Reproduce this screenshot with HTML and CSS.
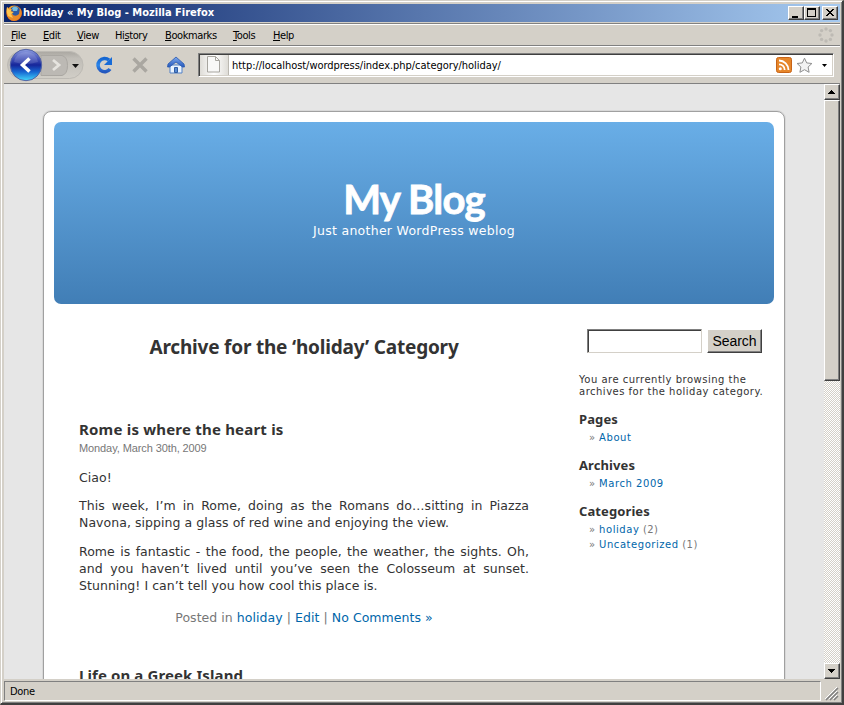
FILE: index.html
```html
<!DOCTYPE html>
<html lang="en">
<head>
<meta charset="utf-8">
<title>holiday « My Blog</title>
<link rel="stylesheet" href="styles.css">
</head>
<body>
<div class="window">
  <div class="titlebar">
    <svg class="fox" width="17" height="17" viewBox="0 0 17 17">
      <defs><radialGradient id="fire" cx=".45" cy=".3"><stop offset="0" stop-color="#ffe04a"/><stop offset=".6" stop-color="#f59a22"/><stop offset="1" stop-color="#c84613"/></radialGradient></defs>
      <circle cx="8.2" cy="8.3" r="7.800" fill="url(#fire)"/>
      <circle cx="9" cy="6.500" r="5.300" fill="#2d5ba4"/>
      <path d="M6 3Q9 0 12 3L11 6L7 6Z" fill="#73bbdf"/>
      <path d="M1 2L3 4L6 4L5 6L8 7L6 8L7 10Q10 12 13 9L14 3Q18 9 13 14Q8 18 3 14Q-1 10 1 2Z" fill="#e88a2a"/>
      <path d="M1 2L3 4.500L5.500 4.500L4.500 6.500L7.500 7.500L5 9L7 13L2 11Q0 7 1 2Z" fill="#ffc64e"/>
    </svg>
    <span class="title">holiday « My Blog - Mozilla Firefox</span>
    <div class="wbtn"><svg width="15" height="14" shape-rendering="crispEdges"><rect x="4" y="10" width="6" height="2"/></svg></div>
    <div class="wbtn"><svg width="15" height="14" shape-rendering="crispEdges"><path d="M3 2h9v9H3zM4 4v6h7V4z" fill-rule="evenodd"/></svg></div>
    <div class="wbtn close"><svg width="15" height="14" shape-rendering="crispEdges"><path d="M4 3h2v1h1v1h2V4h1V3h2v1h-1v1h-1v1H9v1h1v1h1v1h1v1h-2V9H9V8H7v1H6v1H4V9h1V8h1V7h1V6H6V5H5V4H4z"/></svg></div>
  </div>
  <div class="menubar">
    <span class="m1"><u>F</u>ile</span><span class="m2"><u>E</u>dit</span><span class="m3"><u>V</u>iew</span><span class="m4">Hi<u>s</u>tory</span><span class="m5"><u>B</u>ookmarks</span><span class="m6"><u>T</u>ools</span><span class="m7"><u>H</u>elp</span>
    <svg class="throbber" width="16" height="16" viewBox="0 0 16 16" fill="#bdbab4"><circle cx="8" cy="2" r="1.7"/><circle cx="12.4" cy="3.6" r="1.7"/><circle cx="14" cy="8" r="1.7"/><circle cx="12.4" cy="12.4" r="1.7"/><circle cx="8" cy="14" r="1.7"/><circle cx="3.6" cy="12.4" r="1.7"/><circle cx="2" cy="8" r="1.7"/><circle cx="3.6" cy="3.6" r="1.7"/></svg>
  </div>
  <div class="toolbar">
    <svg class="nav" width="190" height="36" viewBox="4 47 190 36">
      <defs>
        <linearGradient id="pill" x2="0" y2="1"><stop offset="0" stop-color="#aaa7a1"/><stop offset=".25" stop-color="#c0bdb7"/><stop offset="1" stop-color="#d1cec7"/></linearGradient>
        <linearGradient id="ball" x2="0" y2="1"><stop offset="0" stop-color="#8d9de0"/><stop offset=".28" stop-color="#4b59bd"/><stop offset=".5" stop-color="#16269a"/><stop offset=".72" stop-color="#1767d2"/><stop offset="1" stop-color="#43d9fb"/></linearGradient>
        <linearGradient id="roof" x2="0" y2="1"><stop offset="0" stop-color="#7fa9ec"/><stop offset="1" stop-color="#2559bd"/></linearGradient>
        <linearGradient id="turn" x2="0" y2="1"><stop offset="0" stop-color="#1667d2"/><stop offset=".5" stop-color="#2b86ea"/><stop offset="1" stop-color="#2457be"/></linearGradient>
      </defs>
      <rect x="7.500" y="51.500" width="75.500" height="27" rx="13.500" fill="url(#pill)" stroke="#bdbab4"/>
      <path d="M41 55.500H62Q67.500 57 67.500 65.500T62 75.500H41Z" fill="#bcb9b4" stroke="#aaa7a2"/>
      <path d="M53 60l6 5-6 5" fill="none" stroke="#e6e4df" stroke-width="2.800"/>
      <circle cx="26" cy="65" r="15.700" fill="url(#ball)" stroke="#5363a4"/>
      <path d="M14 62Q16 52 26 52T38 62Q26 66 14 62Z" fill="#fff" opacity=".13"/>
      <path d="M29.500 58.500L22.500 65l7 6.500" fill="none" stroke="#fff" stroke-width="3.500"/>
      <path d="M72 64h7l-3.500 4z" fill="#111"/>
      <path d="M109 60.200A6.600 6.600 0 1 0 110 69" fill="none" stroke="url(#turn)" stroke-width="3.600"/>
      <path d="M112 57v8h-8l3-3 2-2z" fill="#176bd8"/>
      <path d="M133.500 58.500l13 13m0-13l-13 13" stroke="#aaa7a1" stroke-width="3.400"/>
      <path d="M170 65h12v8h-12z" fill="#eaf3fd" stroke="#5381c7"/>
      <path d="M167.500 67L168 64l8-7 8 7 .5 3h-2l-6.500-5-6.500 5z" fill="url(#roof)" stroke="#2858ae" stroke-width=".8"/>
      <path d="M174.500 67.500h3v5h-3z" fill="#568bd2" stroke="#315ca4"/>
    </svg>
    <div class="address">
      <div class="favicon"><svg width="14" height="17" viewBox="0 0 14 17"><path d="M.5 .5h8l4 4v11.500H.5zM8.500 .5v4h4" fill="#f8f8f7" stroke="#a7a59f"/></svg></div>
      <span class="url">http://localhost/wordpress/index.php/category/holiday/</span>
      <svg class="feed" width="16" height="16" viewBox="0 0 16 16"><rect x=".5" y=".5" width="15" height="15" rx="2" fill="#e6862a" stroke="#c86417"/><circle cx="4.300" cy="11.800" r="1.500" fill="#fff"/><path d="M3 7.300a5.700 5.700 0 0 1 5.700 5.700M3 3.500A9.500 9.500 0 0 1 12.500 13" fill="none" stroke="#fff" stroke-width="1.800"/></svg>
      <svg class="star" width="17" height="17" viewBox="0 0 17 17"><path d="M8.500 1.200l2.200 4.700 5.200.6-3.800 3.500 1 5.300-4.600-2.600-4.600 2.600 1-5.300L1.100 6.500l5.200-.6z" fill="#f2f2f2" stroke="#8e8e8e" stroke-linejoin="round"/></svg>
      <svg class="drop" width="5" height="3"><path d="M0 0h5L2.500 3z"/></svg>
    </div>
  </div>
  <div class="client">
    <div class="viewport">
      <div class="page">
        <header class="banner"><h1>My Blog</h1><div class="tagline">Just another WordPress weblog</div></header>
        <div class="columns">
          <main>
            <h2 class="archive">Archive for the ‘holiday’ Category</h2>
            <article>
              <h3>Rome is where the heart is</h3>
              <div class="date">Monday, March 30th, 2009</div>
              <p>Ciao!</p>
              <p>This week, I’m in Rome, doing as the Romans do…sitting in Piazza Navona, sipping a glass of red wine and enjoying the view.</p>
              <p>Rome is fantastic - the food, the people, the weather, the sights. Oh, and you haven’t lived until you’ve seen the Colosseum at sunset. Stunning! I can’t tell you how cool this place is.</p>
              <div class="meta">Posted in <a>holiday</a> | <a>Edit</a> | <a>No Comments »</a></div>
            </article>
            <h3 class="next">Life on a Greek Island</h3>
          </main>
          <aside>
            <div class="search"><div class="field"></div><div class="submit">Search</div></div>
            <div class="about">You are currently browsing the<br>archives for the holiday category.</div>
            <section><h4>Pages</h4><div class="item">» <a>About</a></div></section>
            <section><h4>Archives</h4><div class="item">» <a>March 2009</a></div></section>
            <section><h4>Categories</h4><div class="item">» <a>holiday</a> (2)</div><div class="item">» <a>Uncategorized</a> (1)</div></section>
          </aside>
        </div>
      </div>
    </div>
    <div class="scrollbar">
      <div class="sbtn"><svg width="12" height="12" shape-rendering="crispEdges"><path d="M5 5h1v1h1v1h1v1h1v1H2V8h1V7h1V6h1z"/></svg></div>
      <div class="thumb"></div>
      <div class="track"></div>
      <div class="sbtn"><svg width="12" height="12" shape-rendering="crispEdges"><path d="M2 5h7v1H8v1H7v1H6v1H5V8H4V7H3V6H2z"/></svg></div>
    </div>
  </div>
  <div class="status"><div class="msg">Done</div><svg width="18" height="20"><path d="M5 19L17 7M9 19l8-8M13 19l4-4" stroke="#808080" stroke-width="1.500"/><path d="M4 18L16 6M8 18l8-8M12 18l4-4" stroke="#fff"/></svg></div>
</div>
</body>
</html>
```
FILE: styles.css
```css
* { box-sizing: border-box; }
body { margin: 0; overflow: hidden; background: #d4d0c8; font-family: "DejaVu Sans", sans-serif; }
svg { display: block; }
.window {
  width: 844px; height: 705px; padding: 3px 2px 0 3px;
  display: flex; flex-direction: column;
  border: 1px solid #d4d0c8; border-right: 2px solid #404040; border-bottom: 2px solid #404040;
  box-shadow: inset 1px 1px #fff, inset -1px -1px #808080;
  background: #d4d0c8;
}
.titlebar {
  height: 18px; flex: none; display: flex; align-items: center;
  background: linear-gradient(90deg, #0a246a, #a6caf0); color: #fff;
  padding: 0 2px;
}
.title { flex: 1; white-space: nowrap; font: bold 11px/18px "DejaVu Sans Condensed", "DejaVu Sans", sans-serif; }
.wbtn, .sbtn, .thumb, .submit {
  background: #d4d0c8; border: 1px solid; border-color: #fff #404040 #404040 #fff;
  box-shadow: inset -1px -1px #808080;
}
.wbtn { width: 16px; height: 14px; overflow: hidden; }
.wbtn svg { margin: -1px 0 0 -1px; }
.close { margin-left: 2px; }
.menubar {
  height: 23px; flex: none; display: flex;
  border-top: 1px solid #808080; border-bottom: 1px solid #808080; box-shadow: inset 0 1px #fff;
  margin-top: 1px;
  font: 11px/23px "DejaVu Sans Condensed", "DejaVu Sans", sans-serif; letter-spacing: -0.4px; padding-left: 7px;
}
.menubar span { flex: none; white-space: nowrap; }
.m1 { width: 32px; } .m2 { width: 34px; } .m3 { width: 38px; } .m4 { width: 50px; }
.m5 { width: 68px; } .m6 { width: 40px; }
.throbber { margin: 3px 6px 0 auto; }
.toolbar { height: 38px; flex: none; display: flex; border-top: 1px solid #fff; border-bottom: 1px solid #808080; }
.nav { flex: none; }
.address {
  margin: 6px 0 0 4px; width: 636px; height: 24px; display: flex; align-items: center; background: #fff;
  border: 1px solid; border-color: #808080 #fff #fff #808080; box-shadow: inset 1px 1px #404040, inset -1px -1px #d4d0c8;
}
.favicon { width: 29px; height: 20px; margin-left: 1px; padding: 1px 0 0 7px; background: linear-gradient(90deg, #dedcd7, #fff 50%, #dedcd7); border-right: 1px solid #bbb8b1; }
.url { margin-left: 3px; flex: 1; white-space: nowrap; font: 11px/20px "DejaVu Sans Condensed", "DejaVu Sans", sans-serif; letter-spacing: -0.04px; padding-top: 2px; }
.star { margin-left: 4px; }
.drop { margin: 0 6px 0 9px; }
.client { height: 595px; flex: none; display: flex; }
.viewport { width: 820px; flex: none; overflow: hidden; background: #e6e6e6; padding: 27px 0 0 39px; }
.page {
  width: 742px; height: 640px; padding: 10px 10px 0; background: #fff;
  border: 1px solid #a0a0a0; border-radius: 8px; box-shadow: 0 0 0 1px #d8d8d8;
}
.banner {
  height: 182px; border-radius: 7px; padding-top: 54px; text-align: center; color: #fff;
  background: linear-gradient(#69aee7, #417eb6);
}
h1, h2, h3, h4, p { margin: 0; }
h1 { font: bold 40px/46px Lato, sans-serif; letter-spacing: -.8px; -webkit-text-stroke: .8px #fff; }
.tagline { font-size: 12.500px; line-height: 18px; letter-spacing: .28px; }
.columns { display: flex; padding-left: 25px; color: #333; }
main { width: 450px; }
.archive { margin-top: 31px; text-align: center; font: bold 19px/24px "Noto Sans", sans-serif; letter-spacing: -.2px; white-space: nowrap; }
h3 { font: bold 15px/20px "Noto Sans", sans-serif; letter-spacing: .2px; white-space: nowrap; }
article { margin-top: 60px; }
.date { font: 11px/16px "Liberation Sans", sans-serif; letter-spacing: -.1px; color: #777; margin: 1px 0 13px; }
p { font-size: 12.500px; line-height: 17px; text-align: justify; margin-bottom: 12px; letter-spacing: .05px; }
.date + p { margin-bottom: 11px; }
.meta { margin-top: 15px; text-align: center; font-size: 12.500px; line-height: 17px; letter-spacing: .05px; color: #777; white-space: nowrap; }
a { color: #06a; }
.next { margin-top: 39px; letter-spacing: .1px; }
aside { width: 194px; margin-left: 50px; font-size: 10px; white-space: nowrap; }
.search { display: flex; margin: 25px 0 0 8px; }
.field { width: 115px; height: 24px; border: 1px solid; border-color: #808080 #d4d0c8 #d4d0c8 #808080; box-shadow: inset 1px 1px #404040; }
.submit { width: 55px; height: 24px; margin-left: 5px; text-align: center; font: 14px/23px "Liberation Sans", sans-serif; letter-spacing: -.1px; color: #000; }
.about { margin-top: 21px; line-height: 12px; letter-spacing: .5px; margin-bottom: 13px; }
section { margin-bottom: 12px; }
h4 { font: bold 13px/17px "Noto Sans", sans-serif; height: 19px; letter-spacing: .1px; }
.item { line-height: 15px; color: #777; padding-left: 10px; letter-spacing: .4px; }
.item a { letter-spacing: .55px; }
.scrollbar { width: 16px; flex: none; display: flex; flex-direction: column; }
.sbtn { height: 16px; flex: none; padding-left: 1px; }
.thumb { height: 281px; flex: none; }
.track { flex: 1; background: repeating-conic-gradient(#fff 0 25%, #d4d0c8 0 50%) 0 0 / 2px 2px; }
.status { height: 22px; margin-top: 2px; display: flex; }
.msg { width: 817px; height: 20px; border: 1px solid; border-color: #808080 #fff #fff #808080; font: 11px/19px "DejaVu Sans Condensed", sans-serif; padding-left: 5px; letter-spacing: -0.3px; }
```
